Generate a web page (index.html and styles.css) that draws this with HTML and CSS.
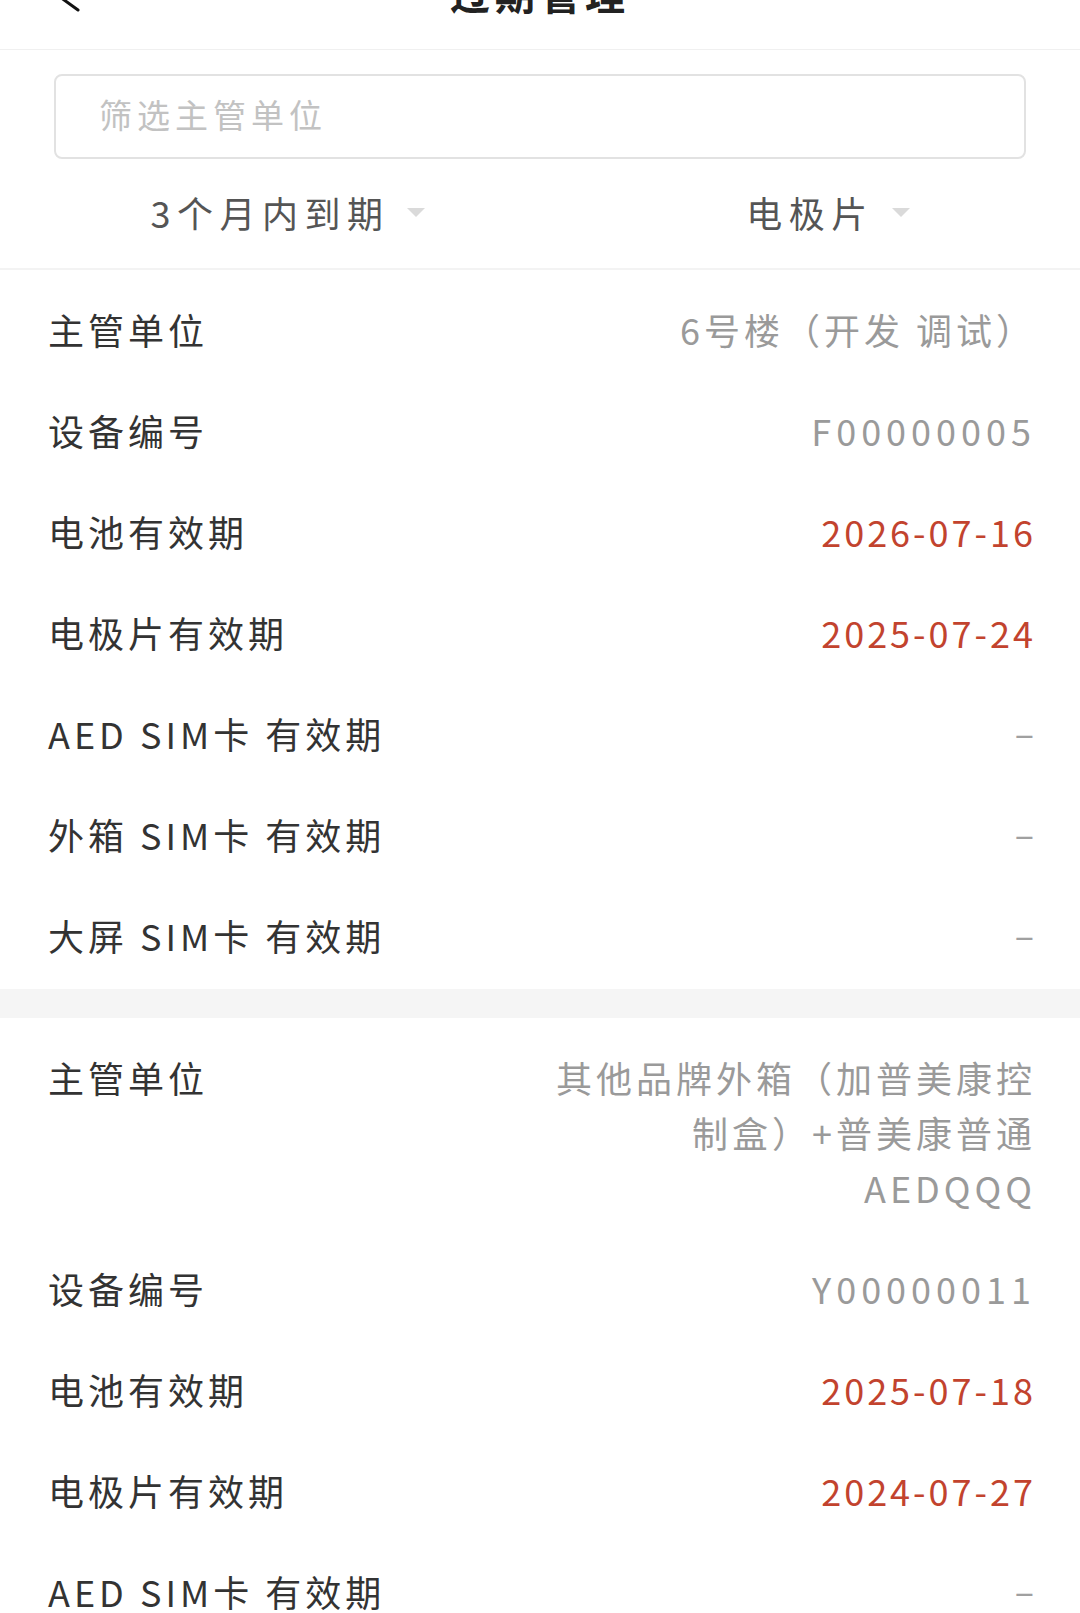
FILE: index.html
```html
<!DOCTYPE html>
<html lang="zh-CN">
<head>
<meta charset="utf-8">
<title>过期管理</title>
<link rel="stylesheet" href="styles.css">
</head>
<body>
<div class="page">
  <header class="header">
    <svg class="back" width="40" height="50" viewBox="0 0 40 50" aria-hidden="true">
      <polyline points="30,-22 12,-3 30,10" fill="none" stroke="#111" stroke-width="3" stroke-linecap="round" stroke-linejoin="round"/>
    </svg>
    <div class="title">过期管理</div>
  </header>

  <section class="search">
    <div class="search-box">筛选主管单位</div>
  </section>

  <nav class="filters">
    <div class="filter"><span class="filter-text">3个月内到期</span></div>
    <div class="filter"><span class="filter-text">电极片</span></div>
  </nav>

  <section class="card">
    <div class="row"><div class="label">主管单位</div><div class="value">6号楼（开发 调试）</div></div>
    <div class="row"><div class="label">设备编号</div><div class="value id">F00000005</div></div>
    <div class="row"><div class="label">电池有效期</div><div class="value date">2026-07-16</div></div>
    <div class="row"><div class="label">电极片有效期</div><div class="value date">2025-07-24</div></div>
    <div class="row"><div class="label">AED SIM卡 有效期</div><div class="value dash">–</div></div>
    <div class="row"><div class="label">外箱 SIM卡 有效期</div><div class="value dash">–</div></div>
    <div class="row"><div class="label">大屏 SIM卡 有效期</div><div class="value dash">–</div></div>
  </section>

  <div class="band"></div>

  <section class="card">
    <div class="row"><div class="label">主管单位</div><div class="value">其他品牌外箱（加普美康控制盒）+普美康普通AEDQQQ</div></div>
    <div class="row"><div class="label">设备编号</div><div class="value id">Y00000011</div></div>
    <div class="row"><div class="label">电池有效期</div><div class="value date">2025-07-18</div></div>
    <div class="row"><div class="label">电极片有效期</div><div class="value date">2024-07-27</div></div>
    <div class="row"><div class="label">AED SIM卡 有效期</div><div class="value dash">–</div></div>
  </section>
</div>
</body>
</html>
```

FILE: styles.css
```css
* { box-sizing: border-box; }
html, body { margin: 0; padding: 0; background: #fff; }
body {
  font-family: "Noto Sans CJK SC", "Noto Sans", sans-serif;
  color: #333;
}
.page { width: 1080px; overflow: hidden; }

.header {
  height: 50px;
  position: relative;
  overflow: hidden;
  display: flex;
  justify-content: center;
  border-bottom: 1px solid #f0f0f0;
}
.back { position: absolute; left: 48px; top: 0; overflow: visible; }
.title {
  margin-top: -27px;
  font-size: 40px;
  line-height: 40px;
  font-weight: 700;
  letter-spacing: 5px;
  color: #222;
  height: 40px;
}

.search { padding: 24px 54px 0; }
.search-box {
  height: 85px;
  border: 2px solid #e2e2e2;
  border-radius: 8px;
  padding-left: 43px;
  padding-bottom: 5px;
  display: flex;
  align-items: center;
  font-size: 33px;
  letter-spacing: 5px;
  color: #c2c2c2;
}

.filters {
  display: grid;
  grid-template-columns: 1fr 1fr;
  height: 111px;
  padding-bottom: 4px;
  border-bottom: 2px solid #f3f3f3;
}
.filter { display: flex; align-items: center; justify-content: center; }
.filter-text {
  position: relative;
  font-size: 36px;
  letter-spacing: 6.5px;
  color: #555;
  line-height: 40px;
}
.filter-text::after {
  content: "";
  position: absolute;
  left: 100%;
  top: 50%;
  margin-left: 18px;
  margin-top: -4px;
  border-left: 9px solid transparent;
  border-right: 9px solid transparent;
  border-top: 9px solid #dadada;
}

.card { padding-top: 12px; }
.band { height: 29px; background: #f5f5f5; }

.row {
  display: flex;
  justify-content: space-between;
  align-items: flex-start;
  padding: 20px 44px 26px 48px;
  font-size: 36px;
  line-height: 55px;
}
.label { color: #333; letter-spacing: 4px; white-space: nowrap; }
.value {
  color: #9a9a9a;
  letter-spacing: 4px;
  text-align: right;
  max-width: 500px;
}
.value.id { letter-spacing: 5px; }
.value.date { color: #c2432e; letter-spacing: 3px; }
.value.dash { color: #a0a0a0; letter-spacing: 0; margin-right: 2px; margin-top: -2px; }
```
